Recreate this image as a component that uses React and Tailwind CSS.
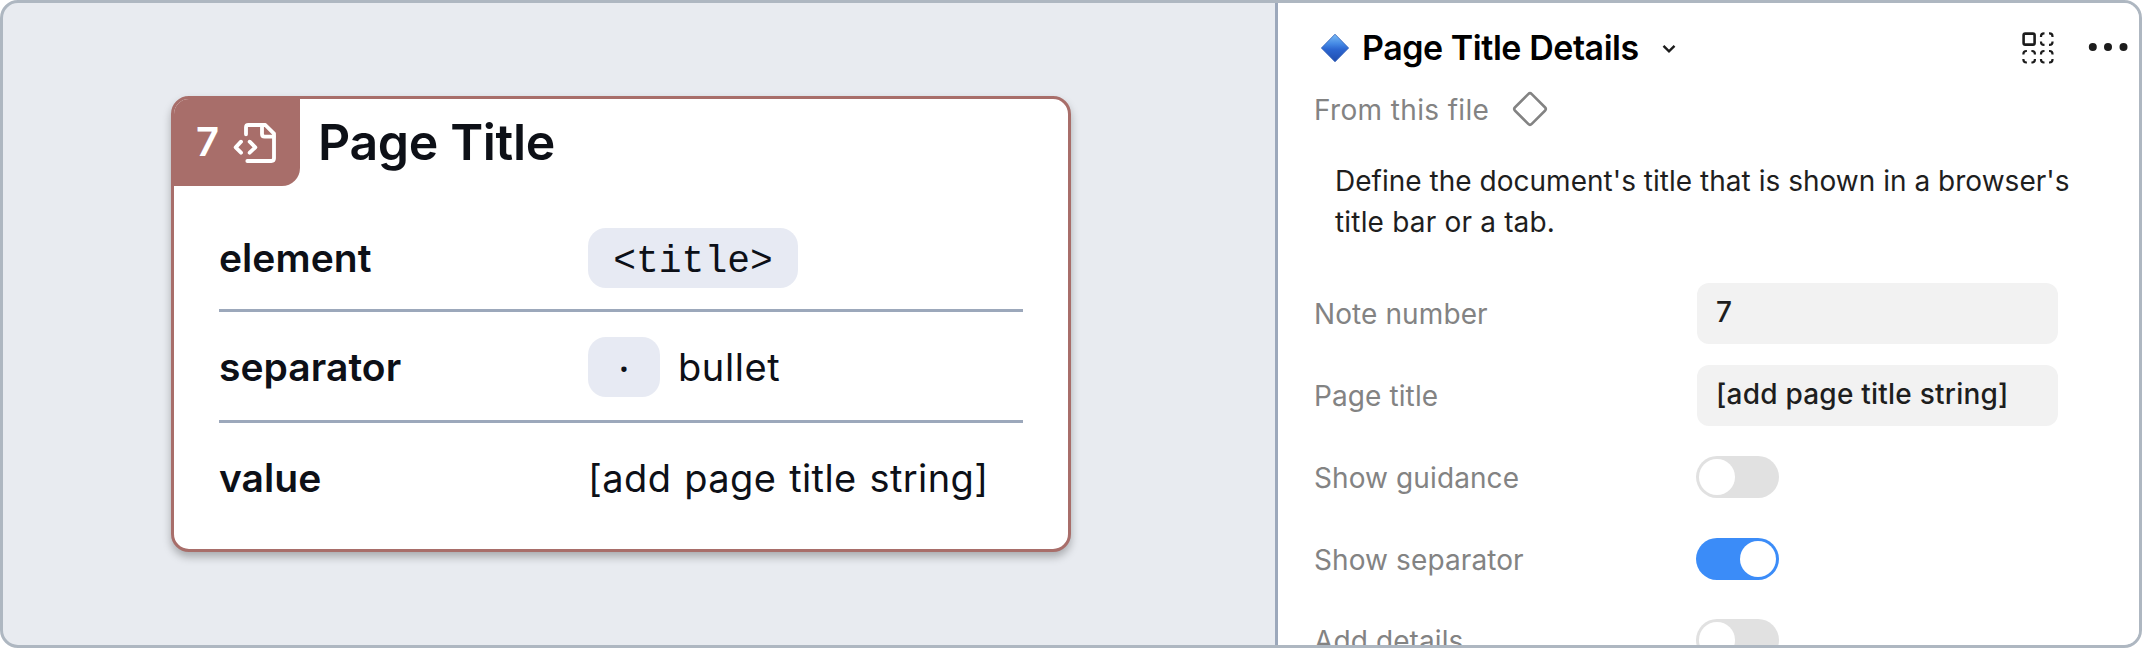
function FileCodeIcon() {
  return (
    <svg className="h-[42px] w-[44px]" viewBox="250 117 132 126" fill="none" stroke="currentColor" strokeWidth="11.5" strokeLinecap="round" strokeLinejoin="round">
      <path d="M289 154V133Q289 126 296 126H347L373 152V226Q373 234 365 234H293" />
      <path d="M337 127V153Q337 161 345 161H372" />
      <path d="M274 176L258 193L274 209" />
      <path d="M300 176L317 193L300 209" />
    </svg>
  );
}

function BlueDiamond() {
  return (
    <svg className="h-[30px] w-[30px]" viewBox="0 0 30 30">
      <defs>
        <linearGradient id="gem" x1="0" y1="0" x2="0" y2="1">
          <stop offset="0" stopColor="#7bbcf5" />
          <stop offset="0.35" stopColor="#4488e4" />
          <stop offset="0.55" stopColor="#2c66d0" />
          <stop offset="1" stopColor="#1f4cae" />
        </linearGradient>
      </defs>
      <path d="M15 1.2L28.6 15L15 28.8L1.4 15Z" fill="url(#gem)" stroke="#2a59b5" strokeWidth="0.8" strokeLinejoin="round" />
    </svg>
  );
}

const DASHED = "M0 3.5V3A3 3 0 0 1 3 0H3.5M8 0H8.5A3 3 0 0 1 11.5 3V3.5M11.5 8V8.5A3 3 0 0 1 8.5 11.5H8M3.5 11.5H3A3 3 0 0 1 0 8.5V8";

function VariantsIcon() {
  return (
    <svg className="h-[32px] w-[32px]" viewBox="0 0 32 32" fill="none" stroke="#1c1c1c" strokeWidth="2.2">
      <rect x="1.6" y="1.6" width="11" height="11" rx="1.6" strokeWidth="2.6" />
      <path d={DASHED} transform="translate(19 1.4)" />
      <path d={DASHED} transform="translate(1.4 19)" />
      <path d={DASHED} transform="translate(19 19)" />
    </svg>
  );
}

function Row({ label, children, className }) {
  return (
    <div className={`flex items-center ${className}`}>
      <div className="w-[369px] pb-[2px] text-[39px] leading-none font-semibold tracking-[0.05px]">{label}</div>
      {children}
    </div>
  );
}

function Prop({ label, children }) {
  return (
    <div className="flex h-[81.75px] items-center">
      <div className="w-[382px] pt-[2px] text-[28px] leading-none tracking-[0.1px] text-[#838383]">{label}</div>
      {children}
    </div>
  );
}

function Field({ children }) {
  return (
    <div className="ml-px flex h-[61px] w-[361px] items-center rounded-xl bg-[#f2f2f2] pb-[3px] pl-[19px] text-[28px] leading-none font-medium tracking-[0.22px] text-[#1e1e1e]">
      {children}
    </div>
  );
}

function Toggle({ on }) {
  return (
    <div className={`flex h-[42px] w-[83px] items-center rounded-full px-[3px] ${on ? "justify-end bg-[#3b8cf8]" : "bg-[#e1e1e1]"}`}>
      <div className="size-9 rounded-full bg-white" />
    </div>
  );
}

export default function App() {
  return (
    <div className="flex h-[648px] w-[2142px] overflow-hidden rounded-[18px] border-3 border-[#aeb7c1] bg-[#e8ebf0] font-['Inter',sans-serif]">
      <div className="w-[1272px] shrink-0 pt-[93px] pl-[168px]">
        <div className="h-[456px] w-[900px] overflow-hidden rounded-[18px] border-3 border-[#a86e6a] bg-white text-[#0d1017] shadow-[0_5px_9px_rgba(0,0,0,0.27)]">
          <div className="flex h-[87px] items-center">
            <div className="flex h-[87px] w-[126px] items-center rounded-br-[18px] bg-[#a86e6a] pl-[22px] text-white">
              <span className="w-[37px] pb-[2px] text-[40px] leading-none font-semibold">7</span>
              <FileCodeIcon />
            </div>
            <h1 className="ml-[18px] pb-[2px] text-[50px] leading-none font-semibold tracking-[-0.35px]">Page Title</h1>
          </div>
          <div className="px-[45px]">
            <Row label="element" className="h-[126px] border-b-3 border-[#9ca8bb] pt-[21px]">
              <code className="flex h-[60px] w-[210px] items-center justify-center rounded-[18px] bg-[#e7eaf3] pt-[8px] font-['Liberation_Mono',monospace] text-[38px] leading-none">
                {"<title>"}
              </code>
            </Row>
            <Row label="separator" className="h-[111px] border-b-3 border-[#9ca8bb] pt-[2px]">
              <code className="flex h-[60px] w-[72px] items-center justify-center rounded-[18px] bg-[#e7eaf3] pt-px font-['Noto_Sans',sans-serif] text-[38px] leading-none font-medium">
                ·
              </code>
              <span className="ml-[18px] text-[38px] leading-none tracking-[0.6px]">bullet</span>
            </Row>
            <Row label="value" className="h-[126px] pb-4">
              <span className="text-[38px] leading-none tracking-[0.4px] [word-spacing:1.8px]">[add page title string]</span>
            </Row>
          </div>
        </div>
      </div>
      <div className="min-w-0 grow border-l-3 border-[#9ca8bb] bg-white pl-[36px]">
        <div className="flex h-[89px] items-center">
          <div className="ml-[6px] flex items-center">
            <BlueDiamond />
            <h2 className="ml-[12px] w-[300px] text-[34px] leading-none font-semibold tracking-[-0.45px] whitespace-nowrap text-black">Page Title Details</h2>
            <svg className="mt-[2px] h-[10px] w-[14px]" viewBox="0 0 14 10" fill="none" stroke="#1c1c1c" strokeWidth="2.4">
              <path d="M1.5 1.8L7 7.3L12.5 1.8" />
            </svg>
          </div>
          <div className="mr-[11px] ml-auto flex items-center gap-[34px]">
            <VariantsIcon />
            <svg className="h-[10px] w-[40px]" viewBox="0 0 40 10" fill="#1c1c1c">
              <circle cx="4.8" cy="4" r="4" />
              <circle cx="20" cy="4" r="4" />
              <circle cx="35.5" cy="4" r="4" />
            </svg>
          </div>
        </div>
        <div className="flex h-[34px] items-center text-[28px] leading-none text-[#838383]">
          <span className="w-[197px] pt-[2px] tracking-[0.35px]">From this file</span>
          <svg className="h-[38px] w-[38px]" viewBox="0 0 38 38" fill="none" stroke="#838383" strokeWidth="2.6">
            <rect x="7.2" y="7.2" width="23.6" height="23.6" rx="2.5" transform="rotate(45 19 19)" />
          </svg>
        </div>
        <p className="mt-[35px] pl-[21px] text-[28px] leading-[41px] tracking-[0.02px] text-[#1e1e1e]">
          Define the document's title that is shown in a browser's
          <br />
          <span className="tracking-[0.18px]">title bar or a tab.</span>
        </p>
        <div className="mt-[29.5px]">
          <Prop label="Note number"><Field>7</Field></Prop>
          <Prop label="Page title"><Field>[add page title string]</Field></Prop>
          <Prop label="Show guidance"><Toggle /></Prop>
          <Prop label="Show separator"><Toggle on /></Prop>
          <Prop label="Add details"><Toggle /></Prop>
        </div>
      </div>
    </div>
  );
}
